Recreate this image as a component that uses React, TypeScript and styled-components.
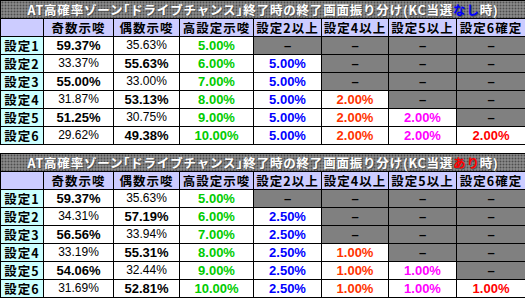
import * as React from "react";
import styled, { createGlobalStyle } from "styled-components";

const GlobalStyle = createGlobalStyle`
  html, body {
    margin: 0;
    padding: 0;
    background: #ffffff;
  }
  body {
    font-family: "Liberation Sans", "Noto Sans CJK JP", sans-serif;
  }
`;

type Cell = string | null;

type TableData = {
  cond: string;
  condColor: string;
  rows: Cell[][];
};

const colWidths = [43, 70, 66, 74, 68, 67, 68, 69];
const headers = ["奇数示唆", "偶数示唆", "高設定示唆", "設定2以上", "設定4以上", "設定5以上", "設定6確定"];
const valueColors = ["#000000", "#000000", "#00cc00", "#0000ff", "#ff3300", "#ff00ff", "#ff0000"];

const tables: TableData[] = [
  {
    cond: "なし",
    condColor: "#0000ff",
    rows: [
      ["59.37%", "35.63%", "5.00%", null, null, null, null],
      ["33.37%", "55.63%", "6.00%", "5.00%", null, null, null],
      ["55.00%", "33.00%", "7.00%", "5.00%", null, null, null],
      ["31.87%", "53.13%", "8.00%", "5.00%", "2.00%", null, null],
      ["51.25%", "30.75%", "9.00%", "5.00%", "2.00%", "2.00%", null],
      ["29.62%", "49.38%", "10.00%", "5.00%", "2.00%", "2.00%", "2.00%"],
    ],
  },
  {
    cond: "あり",
    condColor: "#ff0000",
    rows: [
      ["59.37%", "35.63%", "5.00%", null, null, null, null],
      ["34.31%", "57.19%", "6.00%", "2.50%", null, null, null],
      ["56.56%", "33.94%", "7.00%", "2.50%", null, null, null],
      ["33.19%", "55.31%", "8.00%", "2.50%", "1.00%", null, null],
      ["54.06%", "32.44%", "9.00%", "2.50%", "1.00%", "1.00%", null],
      ["31.69%", "52.81%", "10.00%", "2.50%", "1.00%", "1.00%", "1.00%"],
    ],
  },
];

const Page = styled.div`
  display: flex;
  flex-direction: column;
  gap: 8px;
  width: 525px;
`;

const Table = styled.table`
  border-collapse: collapse;
  table-layout: fixed;
  width: 525px;
  border: 1px solid #000;
`;

const TitleCell = styled.th`
  height: 17px;
  padding: 0;
  border: 1px solid #000;
  background-color: #9a9a9a;
  background-image: radial-gradient(circle at 1px 1px, #4a4a4a 0.7px, transparent 0.9px);
  background-size: 3px 3px;
  color: #ffffff;
  font-family: "Noto Sans CJK JP", sans-serif;
  font-size: 12.5px;
  letter-spacing: 0.8px;
  font-weight: 700;
  line-height: 17px;
  text-align: center;
  white-space: nowrap;
  text-shadow: 1px 1px 0 #555;
`;

const Cond = styled.span<{ $color: string }>`
  color: ${({ $color }) => $color};
`;

const HeadRow = styled.tr`
  height: 18px;
`;

const HeadCell = styled.th`
  padding: 0;
  border: 1px solid #000;
  background: #ccccff;
  color: #000;
  font-family: "Noto Sans CJK JP", sans-serif;
  font-size: 12.5px;
  letter-spacing: 1px;
  font-weight: 700;
  line-height: 17px;
  text-align: center;
  white-space: nowrap;
  overflow: hidden;
`;

const DataRow = styled.tr`
  height: 18px;
`;

const LabelCell = styled.th`
  padding: 0;
  border: 1px solid #000;
  background: #ccffff;
  color: #000;
  font-family: "Noto Sans CJK JP", sans-serif;
  font-size: 12.5px;
  letter-spacing: 1px;
  font-weight: 700;
  line-height: 17px;
  text-align: center;
  white-space: nowrap;
  overflow: hidden;
`;

const ValueCell = styled.td<{ $color: string; $bold: boolean }>`
  padding: 0;
  border: 1px solid #000;
  background: #ffffff;
  color: ${({ $color }) => $color};
  font-family: "Liberation Sans", sans-serif;
  font-size: ${({ $bold }) => ($bold ? "13px" : "12px")};
  font-weight: ${({ $bold }) => ($bold ? 700 : 400)};
  line-height: 17px;
  text-align: center;
  white-space: nowrap;
`;

const EmptyCell = styled.td`
  padding: 0;
  border: 1px solid #000;
  background: #808080;
  color: #000;
  font-family: "Liberation Sans", sans-serif;
  font-size: 13px;
  font-weight: 700;
  line-height: 17px;
  text-align: center;
`;

const ResultTable = ({ data }: { data: TableData }) => (
  <Table>
    <colgroup>
      {colWidths.map((w, i) => (
        <col key={i} style={{ width: w }} />
      ))}
    </colgroup>
    <thead>
      <tr>
        <TitleCell colSpan={8}>
          AT高確率ゾーン｢ドライブチャンス｣終了時の終了画面振り分け(KC当選
          <Cond $color={data.condColor}>{data.cond}</Cond>時)
        </TitleCell>
      </tr>
      <HeadRow>
        <HeadCell />
        {headers.map(h => (
          <HeadCell key={h}>{h}</HeadCell>
        ))}
      </HeadRow>
    </thead>
    <tbody>
      {data.rows.map((row, r) => (
        <DataRow key={r}>
          <LabelCell>設定{r + 1}</LabelCell>
          {row.map((v, c) => {
            if (v === null) {
              return <EmptyCell key={c}>–</EmptyCell>;
            }
            // 奇数設定は奇数示唆、偶数設定は偶数示唆が太字
            const bold = c >= 2 || (c === 0 && r % 2 === 0) || (c === 1 && r % 2 === 1);
            return (
              <ValueCell key={c} $color={valueColors[c]} $bold={bold}>
                {v}
              </ValueCell>
            );
          })}
        </DataRow>
      ))}
    </tbody>
  </Table>
);

const App = () => (
  <>
    <GlobalStyle />
    <Page>
      {tables.map(t => (
        <ResultTable key={t.cond} data={t} />
      ))}
    </Page>
  </>
);

export default App;
